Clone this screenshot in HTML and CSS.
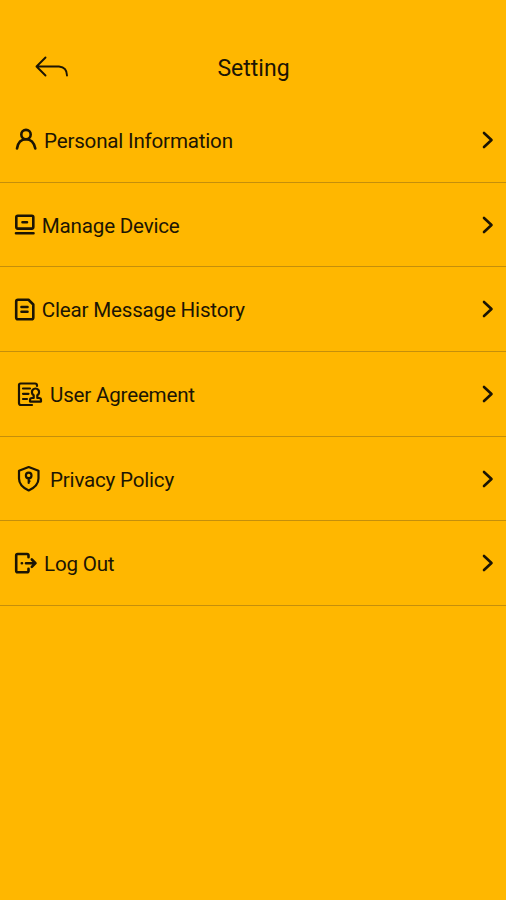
FILE: index.html
```html
<!DOCTYPE html>
<html lang="en">
<head>
<meta charset="utf-8">
<title>Setting</title>
<link rel="stylesheet" href="styles.css">
</head>
<body>
<header class="bar">
  <svg class="back" viewBox="0 0 36 26"><path d="M10.500 3.500 1.500 12.500 10.500 21.500M1.500 12.500H24C29 13 32 16 32 21.500"/></svg>
  <h1>Setting</h1>
</header>
<main class="list">
  <a class="row">
    <svg class="icon" viewBox="0 0 32 32"><circle cx="14" cy="10.600" r="4.700"/><path d="M5 24.500C6 18.500 9.500 15.300 14 15.300S22 18.500 23.300 24.500"/></svg>
    <span class="label mid">Personal Information</span>
    <svg class="chev" viewBox="0 0 12 18"><path d="m2 2 7.500 7-7.500 7"/></svg>
  </a>
  <a class="row">
    <svg class="icon" viewBox="0 0 32 32"><rect x="4.300" y="6.800" width="17" height="12.800" rx="1.500"/><path d="M4 24.200H21.500M10.500 13.200H15"/></svg>
    <span class="label">Manage Device</span>
    <svg class="chev" viewBox="0 0 12 18"><path d="m2 2 7.500 7-7.500 7"/></svg>
  </a>
  <a class="row">
    <svg class="icon" viewBox="0 0 32 32"><path d="M6 6.800H16.500L21.300 11.500V24.500Q21.300 26.300 19.500 26.300H6Q4.200 26.300 4.200 24.500V8.600Q4.200 6.800 6 6.800ZM9.500 14H15.500M9.500 18.800H15.500"/></svg>
    <span class="label">Clear Message History</span>
    <svg class="chev" viewBox="0 0 12 18"><path d="m2 2 7.500 7-7.500 7"/></svg>
  </a>
  <a class="row">
    <svg class="icon fine" viewBox="0 0 32 32"><path d="M25 8V7.500Q25 5.500 23 5.500H8.500Q7 5.500 7 7V25Q7 27 9 27H20M11 10.500H18M11 15.800H16.500M11 21H15"/><path d="M21.700 20V17.200A3.600 3.600 0 1 1 25.300 17.200V20H27Q29 20 29 22V23.600H18V22Q18 20 20 20Z"/></svg>
    <span class="label far">User Agreement</span>
    <svg class="chev" viewBox="0 0 12 18"><path d="m2 2 7.500 7-7.500 7"/></svg>
  </a>
  <a class="row">
    <svg class="icon fine" viewBox="0 0 32 32"><path d="M16.700 4 26.500 7.700V15.500C26.500 21.500 22.500 24.800 16.700 27.500 11 24.800 7 21.500 7 15.500V7.700Z"/><circle cx="16.700" cy="12.400" r="2.800"/><path d="M16.700 15.400V20M16.700 18.200H17.500"/></svg>
    <span class="label far">Privacy Policy</span>
    <svg class="chev" viewBox="0 0 12 18"><path d="m2 2 7.500 7-7.500 7"/></svg>
  </a>
  <a class="row">
    <svg class="icon" viewBox="0 0 32 32"><path d="M16.500 10.300V8.500Q16.500 7 15 7H5.700Q4.200 7 4.200 8.500V23.700Q4.200 25.200 5.700 25.200H15Q16.500 25.200 16.500 23.700V21.800M9.800 16.200H10M14 16.200H23M19.800 12.500 23.500 16.200 19.800 19.900"/></svg>
    <span class="label mid">Log Out</span>
    <svg class="chev" viewBox="0 0 12 18"><path d="m2 2 7.500 7-7.500 7"/></svg>
  </a>
</main>
</body>
</html>
```

FILE: styles.css
```css
body {
  margin: 0;
  background: #ffb700;
  font-family: Roboto, sans-serif;
  color: #1c1504;
}
.bar {
  display: grid;
  grid-template-columns: 1fr auto 1fr;
  box-sizing: border-box;
  height: 98px;
  padding: 54px 35px 0;
}
h1 {
  margin: 0;
  padding: 1px 0 0 1px;
  font-size: 23px;
  font-weight: 400;
  line-height: 27px;
}
.row {
  display: flex;
  align-items: center;
  box-sizing: border-box;
  height: 84.7px;
  padding: 0 12.5px 0 12px;
  border-bottom: 1.5px solid #c58f0b;
}
.label {
  margin-left: -2.2px;
  padding-top: 2px;
  font-size: 20.6px;
  letter-spacing: -0.2px;
  line-height: 24px;
}
.label.mid { margin-left: 0; }
.label.far { margin-left: 6px; }
svg {
  flex: none;
  fill: none;
  stroke: #1c1504;
  stroke-width: 2.6;
  stroke-linecap: round;
  stroke-linejoin: round;
}
.back {
  width: 36px;
  height: 26px;
  stroke-width: 1.9;
}
.icon { width: 32px; height: 32px; }
.icon.fine { stroke-width: 2.2; }
.chev {
  width: 12px;
  height: 18px;
  margin-left: auto;
}
```
